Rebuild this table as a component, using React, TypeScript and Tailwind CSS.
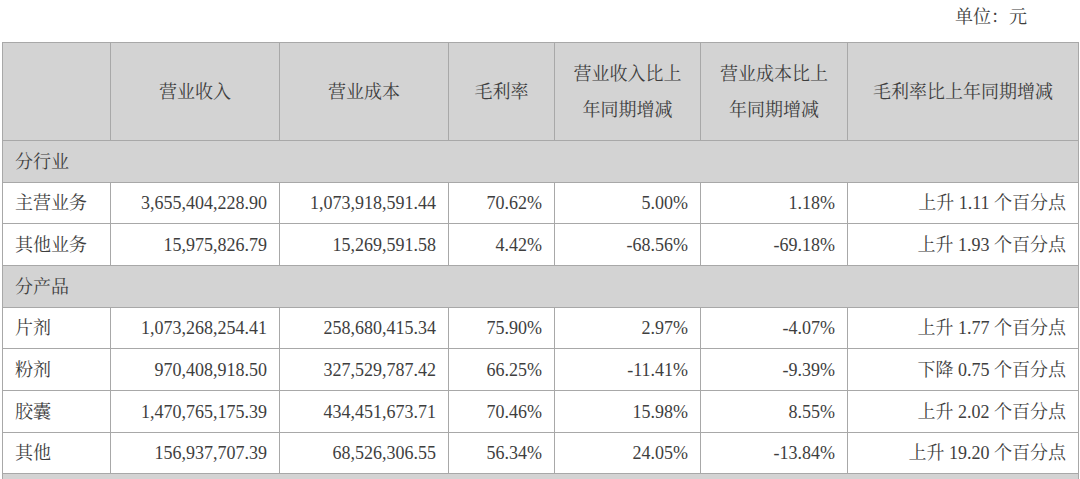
const FONT = `"Liberation Serif", "Noto Serif CJK SC", "Noto Sans CJK SC", serif`;

type Row = [string, string, string, string, string, string, string];

const byIndustry: Row[] = [
  ["主营业务", "3,655,404,228.90", "1,073,918,591.44", "70.62%", "5.00%", "1.18%", "上升 1.11 个百分点"],
  ["其他业务", "15,975,826.79", "15,269,591.58", "4.42%", "-68.56%", "-69.18%", "上升 1.93 个百分点"],
];

const byProduct: Row[] = [
  ["片剂", "1,073,268,254.41", "258,680,415.34", "75.90%", "2.97%", "-4.07%", "上升 1.77 个百分点"],
  ["粉剂", "970,408,918.50", "327,529,787.42", "66.25%", "-11.41%", "-9.39%", "下降 0.75 个百分点"],
  ["胶囊", "1,470,765,175.39", "434,451,673.71", "70.46%", "15.98%", "8.55%", "上升 2.02 个百分点"],
  ["其他", "156,937,707.39", "68,526,306.55", "56.34%", "24.05%", "-13.84%", "上升 19.20 个百分点"],
];

// row pitch in the source alternates 41/42px
const heights = { short: "h-[41px]", tall: "h-[42px]" };

const cell = "border border-[#a8a8a8] px-[12px] align-middle";

const DataRow = ({ row, tall }: { row: Row; tall?: boolean }) => {
  const h = tall ? heights.tall : heights.short;
  return (
    <tr className="bg-white">
      <td className={`${cell} ${h} text-left`}>{row[0]}</td>
      {row.slice(1).map((v, i) => (
        <td key={i} className={`${cell} ${h} text-right`}>
          {v}
        </td>
      ))}
    </tr>
  );
};

const SectionRow = ({ label }: { label: string }) => (
  <tr className="bg-[#d3d3d3]">
    <td colSpan={7} className={`${cell} ${heights.tall} text-left`}>
      {label}
    </td>
  </tr>
);

export default function App() {
  return (
    <div
      className="w-[1080px] h-[479px] overflow-hidden bg-white text-[18px] text-[#3e3e3e]"
      style={{ fontFamily: FONT }}
    >
      <div className="h-[42px] flex items-center justify-end pr-[53px] pb-[8px]">单位：元</div>
      <table className="ml-[2px] w-[1077px] table-fixed border-collapse leading-[36px]">
        <colgroup>
          <col className="w-[108px]" />
          <col className="w-[169px]" />
          <col className="w-[169px]" />
          <col className="w-[106px]" />
          <col className="w-[146px]" />
          <col className="w-[147px]" />
          <col />
        </colgroup>
        <thead>
          <tr className="bg-[#d3d3d3]">
            <th className="border border-[#a8a8a8] h-[98px] font-normal"></th>
            <th className="border border-[#a8a8a8] font-normal">营业收入</th>
            <th className="border border-[#a8a8a8] font-normal">营业成本</th>
            <th className="border border-[#a8a8a8] font-normal">毛利率</th>
            <th className="border border-[#a8a8a8] font-normal">
              营业收入比上
              <br />
              年同期增减
            </th>
            <th className="border border-[#a8a8a8] font-normal">
              营业成本比上
              <br />
              年同期增减
            </th>
            <th className="border border-[#a8a8a8] font-normal">毛利率比上年同期增减</th>
          </tr>
        </thead>
        <tbody>
          <SectionRow label="分行业" />
          <DataRow row={byIndustry[0]} />
          <DataRow row={byIndustry[1]} tall />
          <SectionRow label="分产品" />
          <DataRow row={byProduct[0]} />
          <DataRow row={byProduct[1]} tall />
          <DataRow row={byProduct[2]} tall />
          <DataRow row={byProduct[3]} />
          <SectionRow label="" />
        </tbody>
      </table>
    </div>
  );
}
